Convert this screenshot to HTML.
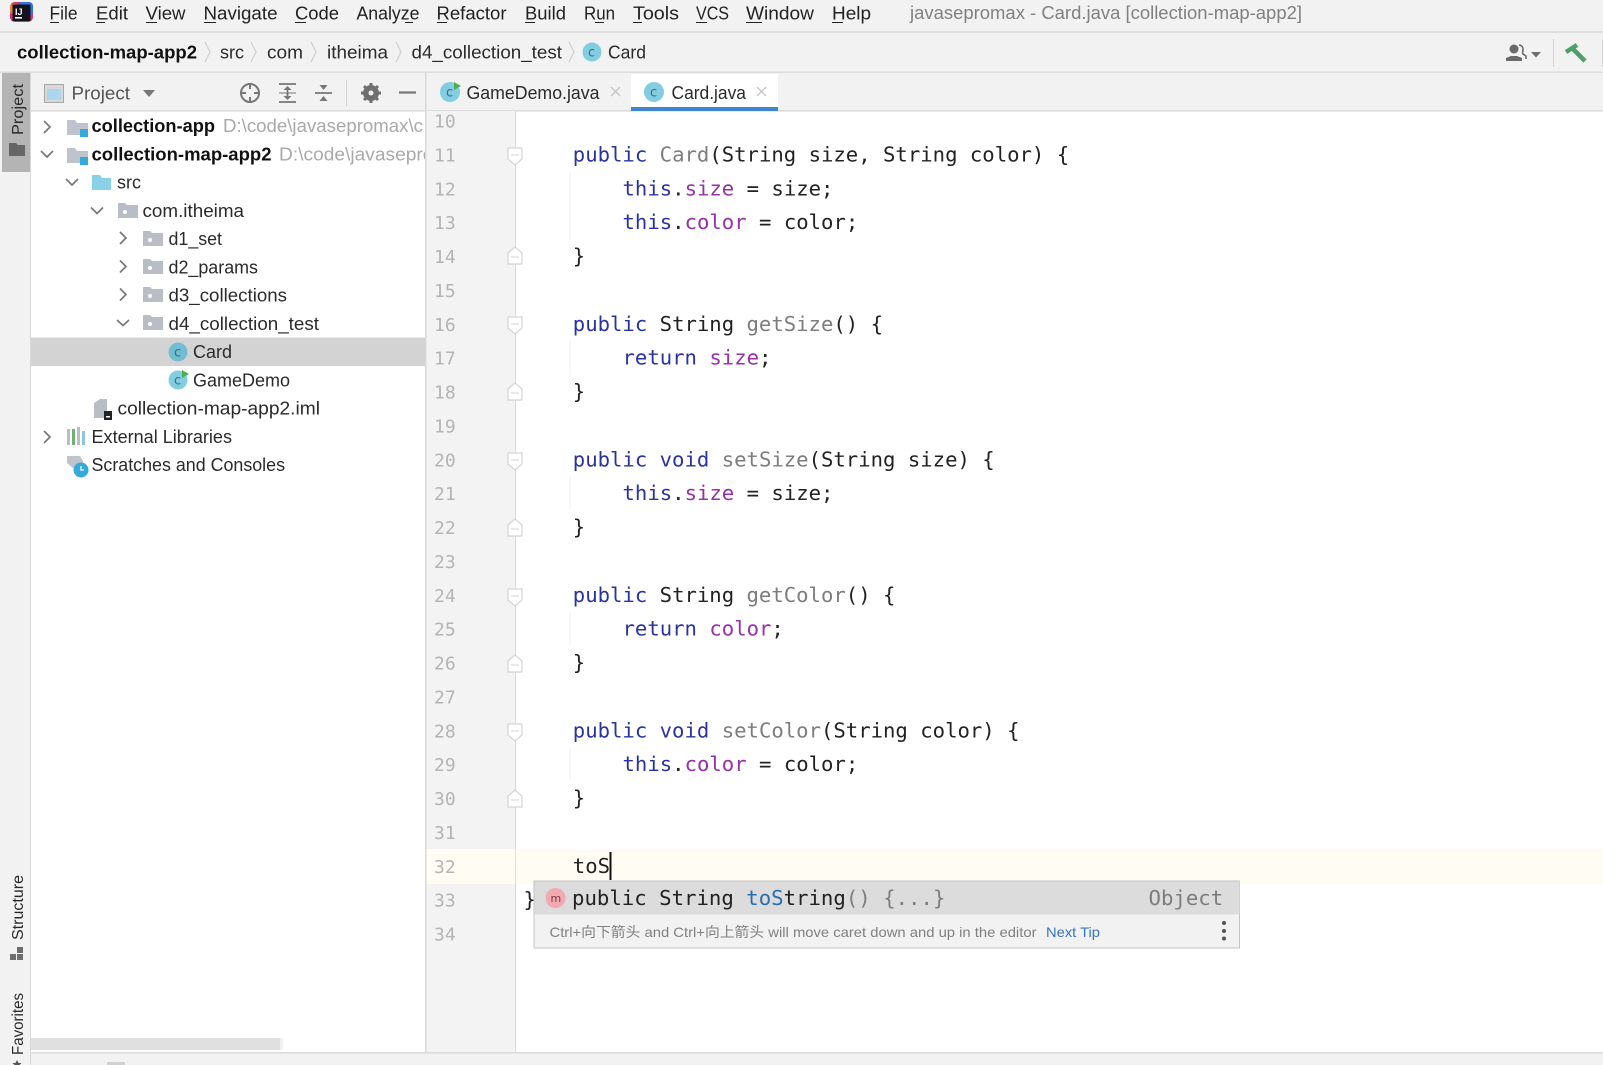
<!DOCTYPE html>
<html><head><meta charset="utf-8"><title>Card.java</title>
<style>
html,body{margin:0;padding:0;background:#fff;width:1603px;height:1065px;overflow:hidden}
svg{display:block;filter:blur(.35px)}
text{font-family:"Liberation Sans","Noto Sans CJK SC",sans-serif;font-size:18px;fill:#2a2a2a;white-space:pre}
.b{font-weight:bold;fill:#111}
.g{fill:#a9a9a9}
.m{font-size:18.5px;fill:#222}
.c{font-family:"DejaVu Sans Mono",monospace;font-size:20.62px;fill:#222}
.p{font-family:"DejaVu Sans Mono",monospace;font-size:20.68px;fill:#222}
.n{font-family:"DejaVu Sans Mono",monospace;font-size:18px;fill:#b4b4b4}
.k{fill:#2a32a0}.f{fill:#9530a6}.u{fill:#7d7d7d}
.ic{font-size:13px;fill:#3b6f80;font-family:"DejaVu Sans",sans-serif}
.chev{fill:none;stroke:#777;stroke-width:1.7}
.sep{fill:none;stroke:#cfcfcf;stroke-width:1.2}
.fold{fill:#fff;stroke:#d4d4d4;stroke-width:1.2}
</style></head><body>
<svg width="1603" height="1065" viewBox="0 0 1603 1065" xmlns="http://www.w3.org/2000/svg">
<rect width="1603" height="1065" fill="#fff"/>
<!-- chrome backgrounds -->
<rect width="1603" height="72" fill="#f2f2f2"/>
<rect y="31" width="1603" height="2" fill="#dcdcdc"/>
<rect y="71.5" width="1603" height="2" fill="#dcdcdc"/>
<rect x="0" y="73" width="30" height="992" fill="#f2f2f2"/>
<rect x="30" y="73" width="1" height="992" fill="#d8d8d8"/>
<rect x="2" y="73" width="28" height="99" fill="#b4b4b4"/>
<rect x="31" y="73" width="394" height="38" fill="#f2f2f2"/>
<rect x="425" y="73" width="1178" height="38" fill="#f2f2f2"/>
<rect x="31" y="110" width="1572" height="1.6" fill="#dcdcdc"/>
<rect x="425" y="73" width="1.5" height="980" fill="#d8d8d8"/>
<rect x="426" y="111" width="89" height="942" fill="#f3f3f3"/>
<rect x="515" y="111" width="1" height="942" fill="#dadada"/>
<!-- current line -->
<rect x="426" y="849" width="1177" height="35" fill="#fffdf3"/>
<rect x="515" y="849" width="1" height="35" fill="#e6e4da"/>
<!-- bottom bar -->
<rect y="1053" x="31" width="1572" height="12" fill="#f2f2f2"/>
<rect y="1052" x="31" width="1572" height="1.6" fill="#dcdcdc"/>
<rect x="31" y="1038" width="252" height="12" fill="#f0f0f0"/>
<rect x="31" y="1038" width="249" height="12" fill="#e0e0e0"/>
<rect x="107" y="1062" width="18" height="3" fill="#d0d0d0"/>

<!-- logo -->
<g>
<rect x="10" y="2" width="23" height="20" rx="5" fill="#d92f6e"/>
<rect x="18" y="2" width="15" height="14" rx="4" fill="#3572e0"/>
<rect x="10" y="4" width="9" height="10" rx="3" fill="#ef8426"/>
<rect x="12.500" y="4.500" width="18" height="16.500" fill="#14121c"/>
<rect x="15" y="17" width="7" height="1.6" fill="#fff"/>
<text x="15" y="15" style="font-size:9px;font-weight:bold;fill:#fff">IJ</text>
</g>
<!-- menu -->
<g>
<text class="m" x="49.5" y="19.5" textLength="28" lengthAdjust="spacingAndGlyphs">File</text>
<text class="m" x="96" y="19.5" textLength="32" lengthAdjust="spacingAndGlyphs">Edit</text>
<text class="m" x="145.5" y="19.5" textLength="40" lengthAdjust="spacingAndGlyphs">View</text>
<text class="m" x="203.5" y="19.5" textLength="74" lengthAdjust="spacingAndGlyphs">Navigate</text>
<text class="m" x="295" y="19.5" textLength="44" lengthAdjust="spacingAndGlyphs">Code</text>
<text class="m" x="356.5" y="19.5" textLength="63" lengthAdjust="spacingAndGlyphs">Analyze</text>
<text class="m" x="436.5" y="19.5" textLength="70" lengthAdjust="spacingAndGlyphs">Refactor</text>
<text class="m" x="525" y="19.5" textLength="41" lengthAdjust="spacingAndGlyphs">Build</text>
<text class="m" x="584" y="19.5" textLength="31" lengthAdjust="spacingAndGlyphs">Run</text>
<text class="m" x="633" y="19.5" textLength="46" lengthAdjust="spacingAndGlyphs">Tools</text>
<text class="m" x="696" y="19.5" textLength="33" lengthAdjust="spacingAndGlyphs">VCS</text>
<text class="m" x="746" y="19.5" textLength="68" lengthAdjust="spacingAndGlyphs">Window</text>
<text class="m" x="832" y="19.5" textLength="39" lengthAdjust="spacingAndGlyphs">Help</text>
<g stroke="#222" stroke-width="1.1">
<path d="M50 22.5h9M96 22.5h9M146 22.5h11M204 22.5h12M295 22.5h11M405 22.5h8M437 22.5h10M525 22.5h10M595 22.5h9M633 22.5h9M696 22.5h11M746 22.5h16M832 22.5h11"/>
</g>
<text x="910" y="19" style="font-size:18px;fill:#808080" textLength="392" lengthAdjust="spacingAndGlyphs">javasepromax - Card.java [collection-map-app2]</text>
</g>
<!-- breadcrumb -->
<g>
<text class="b" x="17" y="58.5" textLength="180" lengthAdjust="spacingAndGlyphs">collection-map-app2</text>
<path class="sep" d="M205 42l5 10-5 10M251 42l5 10-5 10M311 42l5 10-5 10M396 42l5 10-5 10M569 42l5 10-5 10"/>
<text x="220" y="58.5" textLength="24" lengthAdjust="spacingAndGlyphs">src</text>
<text x="267" y="58.5" textLength="36" lengthAdjust="spacingAndGlyphs">com</text>
<text x="327" y="58.5" textLength="61" lengthAdjust="spacingAndGlyphs">itheima</text>
<text x="411.5" y="58.5" textLength="150.5" lengthAdjust="spacingAndGlyphs">d4_collection_test</text>
<circle cx="592" cy="52" r="9.5" fill="#82cde2"/><text class="ic" x="588" y="56.500">c</text>
<text x="608" y="58.5" textLength="38" lengthAdjust="spacingAndGlyphs">Card</text>
</g>
<!-- right toolbar -->
<g>
<circle cx="1514" cy="49" r="4.5" fill="#6a6a6a"/><path d="M1506 61v-3l5-2h6l5 2v3z" fill="#6a6a6a"/>
<path d="M1519 45a4 4 0 0 1 4 4c0 3-1 4 0 5l3 2v3" fill="none" stroke="#6a6a6a" stroke-width="1.600"/>
<path d="M1531 52h10l-5 5.500z" fill="#6e6e6e"/>
<rect x="1553" y="39" width="1" height="28" fill="#d4d4d4"/>
<path d="M1566 52l11-7M1571 47l14 14" fill="none" stroke="#4fa068" stroke-width="4.500"/>
<rect x="1602" y="39" width="1" height="28" fill="#d4d4d4"/>
</g>
<!-- left stripe -->
<g>
<text transform="translate(23 135) rotate(-90)" x="0" y="0" style="font-size:16px" textLength="51" lengthAdjust="spacingAndGlyphs">Project</text>
<path d="M9 143h7l2 2h7v11H9z" fill="#666"/>
<text transform="translate(23 940) rotate(-90)" x="0" y="0" style="font-size:16px" textLength="65" lengthAdjust="spacingAndGlyphs">Structure</text>
<path d="M10 954h6v6h-6zM17 954h6v6h-6zM17 947h6v6h-6z" fill="#6d6d6d"/>
<text transform="translate(23 1055) rotate(-90)" x="0" y="0" style="font-size:16px" textLength="62" lengthAdjust="spacingAndGlyphs">Favorites</text>
<path d="M17 1060l1.500 3h3l-2 2h-5l-2-2h3z" fill="#555"/>
</g>
<!-- project header -->
<g>
<rect x="44.500" y="84.500" width="19" height="18" fill="#d8d8d8" stroke="#a8a8a8"/><rect x="47" y="89" width="14" height="11" fill="#a9d8ec"/>
<text x="71.500" y="99.500" style="fill:#555" textLength="58.500" lengthAdjust="spacingAndGlyphs">Project</text>
<path d="M143 90h12l-6 7z" fill="#777"/>
<g fill="none" stroke="#777" stroke-width="2">
<circle cx="250" cy="93" r="9"/><path d="M250 83v6M250 97v6M240 93h6M254 93h6"/>
<path d="M279 84h17M279 102h17M287.500 88v10" stroke-width="1.800"/>
<path d="M315 93h17" stroke-width="1.800"/>
<path d="M399 92.500h17" stroke-width="2.200"/>
</g>
<path d="M287.500 86l-4 4h8zM287.500 100l-4-4h8zM323.500 90l-4-5h8zM323.500 96l-4 5h8z" fill="#777"/>
<path d="M279 93h17" stroke="#777" stroke-width="1"/>
<rect x="346" y="80" width="1" height="26" fill="#d4d4d4"/>
<circle cx="371" cy="93" r="6" fill="none" stroke="#6f6f6f" stroke-width="4"/>
<path d="M371 83v20M361 93h20M364 86l14 14M378 86l-14 14" stroke="#6f6f6f" stroke-width="3"/>
<circle cx="371" cy="93" r="2.500" fill="#f2f2f2"/>
</g>
<!-- tabs -->
<g>
<rect x="631" y="74" width="147" height="34" fill="#fff"/>
<rect x="631" y="107" width="147" height="4" fill="#3d85d0"/>
<circle cx="450" cy="92" r="10" fill="#82cde2"/><text class="ic" x="446" y="96.500">c</text><path d="M454 82l7 4-7 4z" fill="#4fae4f"/>
<text x="466.500" y="99" textLength="133" lengthAdjust="spacingAndGlyphs">GameDemo.java</text>
<path d="M611 87l9 9M620 87l-9 9" stroke="#c4c4c4" stroke-width="1.300"/>
<circle cx="654" cy="92" r="10" fill="#82cde2"/><text class="ic" x="650" y="96.500">c</text>
<text x="671.500" y="99" textLength="74.500" lengthAdjust="spacingAndGlyphs">Card.java</text>
<path d="M757 87l9 9M766 87l-9 9" stroke="#c4c4c4" stroke-width="1.300"/>
</g>
<!-- tree -->
<rect x="31" y="337.500" width="394" height="28.500" fill="#d3d3d3"/>
<g>
<path class="chev" d="M44 121l6 6-6 6M41 151l6 6 6-6M66 179l6 6 6-6M91 207.500l6 6 6-6M120 232l6 6-6 6M120 260.500l6 6-6 6M120 288.500l6 6-6 6M117 320l6 5.500 6-5.500M44 431l6 6-6 6"/>
<path d="M67 120h8l2 3h11v12H67z" fill="#bfc4cc"/><rect x="80" y="129" width="8" height="8" fill="#35a8dc"/>
<path d="M67 148h8l2 3h11v12H67z" fill="#bfc4cc"/><rect x="80" y="157" width="8" height="8" fill="#35a8dc"/>
<path d="M92 175h8l2 3h9v12H92z" fill="#8ad0e8"/>
<path d="M118 203h7l2 2h11v13h-20z" fill="#b9bdc5"/><circle cx="125" cy="212" r="2" fill="#fff"/>
<path d="M143 231h7l2 2h11v13h-20z" fill="#b9bdc5"/><circle cx="150" cy="240" r="2" fill="#fff"/>
<path d="M143 259h7l2 2h11v13h-20z" fill="#b9bdc5"/><circle cx="150" cy="268" r="2" fill="#fff"/>
<path d="M143 287h7l2 2h11v13h-20z" fill="#b9bdc5"/><circle cx="150" cy="296" r="2" fill="#fff"/>
<path d="M143 315h7l2 2h11v13h-20z" fill="#b9bdc5"/><circle cx="150" cy="324" r="2" fill="#fff"/>
<circle cx="178" cy="352" r="9.500" fill="#73bdd4"/><text class="ic" x="174" y="356.500">c</text>
<circle cx="178" cy="380" r="9.500" fill="#82cde2"/><text class="ic" x="174" y="384.500">c</text><path d="M182 370l7 4-7 4z" fill="#4fae4f"/>
<path d="M94 403l6-4h7v12l4 1v6H94z" fill="#b9bdc5"/><rect x="104" y="411" width="8" height="9" fill="#222"/><rect x="106" y="416" width="4" height="1.500" fill="#fff"/>
<path d="M67 429h3v16h-3z" fill="#b9bdc5"/><path d="M72 429h3v16h-3z" fill="#6db36d"/><path d="M77 427h3v18h-3z" fill="#b9bdc5"/><path d="M82 431h3v14h-3z" fill="#8ec6dd"/>
<path d="M67 456h13l3 5v7h-10l-6-5z" fill="#bfc4cc"/><circle cx="81" cy="470" r="7.500" fill="#35a8dc"/><path d="M81 466v4h3" fill="none" stroke="#fff" stroke-width="1.200"/>

<text class="b" x="91.500" y="132" textLength="123.500" lengthAdjust="spacingAndGlyphs">collection-app</text>
<text class="g" x="223" y="132" textLength="200" lengthAdjust="spacingAndGlyphs">D:\code\javasepromax\c</text>
<text class="b" x="91.500" y="160.250" textLength="180" lengthAdjust="spacingAndGlyphs">collection-map-app2</text>
<text class="g" x="279" y="160.250" textLength="196" lengthAdjust="spacingAndGlyphs">D:\code\javasepromax\</text>
<text x="117" y="188.500" textLength="24" lengthAdjust="spacingAndGlyphs">src</text>
<text x="142.500" y="216.750" textLength="101.500" lengthAdjust="spacingAndGlyphs">com.itheima</text>
<text x="168.500" y="245" textLength="53.500" lengthAdjust="spacingAndGlyphs">d1_set</text>
<text x="168.500" y="273.250" textLength="89.500" lengthAdjust="spacingAndGlyphs">d2_params</text>
<text x="168.500" y="301.500" textLength="118.500" lengthAdjust="spacingAndGlyphs">d3_collections</text>
<text x="168.500" y="329.750" textLength="150.500" lengthAdjust="spacingAndGlyphs">d4_collection_test</text>
<text x="193" y="358" textLength="39" lengthAdjust="spacingAndGlyphs">Card</text>
<text x="193" y="386.250" textLength="97" lengthAdjust="spacingAndGlyphs">GameDemo</text>
<text x="117.500" y="414.500" textLength="202.500" lengthAdjust="spacingAndGlyphs">collection-map-app2.iml</text>
<text x="91.500" y="442.750" textLength="140.500" lengthAdjust="spacingAndGlyphs">External Libraries</text>
<text x="91.500" y="471" textLength="193.500" lengthAdjust="spacingAndGlyphs">Scratches and Consoles</text>
</g>
<!-- cover clipped path overflow: re-draw panel border + gutter -->
<rect x="425" y="111" width="1.500" height="942" fill="#d8d8d8"/>
<rect x="426.500" y="111" width="88.500" height="120" fill="#f3f3f3"/>

<!-- line numbers -->
<g>
<text class="n" x="434" y="127.600">10</text>
<text class="n" x="434" y="161.500">11</text>
<text class="n" x="434" y="195.400">12</text>
<text class="n" x="434" y="229.200">13</text>
<text class="n" x="434" y="263.100">14</text>
<text class="n" x="434" y="297">15</text>
<text class="n" x="434" y="330.900">16</text>
<text class="n" x="434" y="364.700">17</text>
<text class="n" x="434" y="398.600">18</text>
<text class="n" x="434" y="432.500">19</text>
<text class="n" x="434" y="466.400">20</text>
<text class="n" x="434" y="500.200">21</text>
<text class="n" x="434" y="534.100">22</text>
<text class="n" x="434" y="568">23</text>
<text class="n" x="434" y="601.900">24</text>
<text class="n" x="434" y="635.700">25</text>
<text class="n" x="434" y="669.600">26</text>
<text class="n" x="434" y="703.500">27</text>
<text class="n" x="434" y="737.400">28</text>
<text class="n" x="434" y="771.200">29</text>
<text class="n" x="434" y="805.100">30</text>
<text class="n" x="434" y="839">31</text>
<text class="n" x="434" y="872.900">32</text>
<text class="n" x="434" y="906.700">33</text>
<text class="n" x="434" y="940.600">34</text>
</g>
<!-- folds -->
<g>
<path class="fold" d="M508 148h14v11l-7 6-7-6z"/><path d="M511 155h8" stroke="#d0d0d0"/>
<path class="fold" d="M508 317h14v11l-7 6-7-6z"/><path d="M511 324h8" stroke="#d0d0d0"/>
<path class="fold" d="M508 453h14v11l-7 6-7-6z"/><path d="M511 460h8" stroke="#d0d0d0"/>
<path class="fold" d="M508 589h14v11l-7 6-7-6z"/><path d="M511 596h8" stroke="#d0d0d0"/>
<path class="fold" d="M508 724h14v11l-7 6-7-6z"/><path d="M511 731h8" stroke="#d0d0d0"/>
<path class="fold" d="M508 264h14v-11l-7-6-7 6z"/><path d="M511 257h8" stroke="#d0d0d0"/>
<path class="fold" d="M508 400h14v-11l-7-6-7 6z"/><path d="M511 393h8" stroke="#d0d0d0"/>
<path class="fold" d="M508 536h14v-11l-7-6-7 6z"/><path d="M511 529h8" stroke="#d0d0d0"/>
<path class="fold" d="M508 672h14v-11l-7-6-7 6z"/><path d="M511 665h8" stroke="#d0d0d0"/>
<path class="fold" d="M508 807h14v-11l-7-6-7 6z"/><path d="M511 800h8" stroke="#d0d0d0"/>
<path d="M570 172v68M570 341v34M570 476v34M570 612v34M570 747v34" stroke="#f1f1f1" stroke-width="1"/>
</g>
<!-- code -->
<g>
<text class="c" x="572.800" y="161.500"><tspan class="k">public</tspan> <tspan class="u">Card</tspan>(String size, String color) {</text>
<text class="c" x="622.500" y="195.400"><tspan class="k">this</tspan>.<tspan class="f">size</tspan> = size;</text>
<text class="c" x="622.500" y="229.200"><tspan class="k">this</tspan>.<tspan class="f">color</tspan> = color;</text>
<text class="c" x="572.800" y="263.100">}</text>
<text class="c" x="572.800" y="330.900"><tspan class="k">public</tspan> String <tspan class="u">getSize</tspan>() {</text>
<text class="c" x="622.500" y="364.700"><tspan class="k">return</tspan> <tspan class="f">size</tspan>;</text>
<text class="c" x="572.800" y="398.600">}</text>
<text class="c" x="572.800" y="466.400"><tspan class="k">public void</tspan> <tspan class="u">setSize</tspan>(String size) {</text>
<text class="c" x="622.500" y="500.200"><tspan class="k">this</tspan>.<tspan class="f">size</tspan> = size;</text>
<text class="c" x="572.800" y="534.100">}</text>
<text class="c" x="572.800" y="601.900"><tspan class="k">public</tspan> String <tspan class="u">getColor</tspan>() {</text>
<text class="c" x="622.500" y="635.700"><tspan class="k">return</tspan> <tspan class="f">color</tspan>;</text>
<text class="c" x="572.800" y="669.600">}</text>
<text class="c" x="572.800" y="737.400"><tspan class="k">public void</tspan> <tspan class="u">setColor</tspan>(String color) {</text>
<text class="c" x="622.500" y="771.200"><tspan class="k">this</tspan>.<tspan class="f">color</tspan> = color;</text>
<text class="c" x="572.800" y="805.100">}</text>
<text class="c" x="572.800" y="872.900">toS</text>
<rect x="609.500" y="852" width="2" height="28" fill="#111"/>
<text class="c" x="523.500" y="906.700">}</text>
</g>
<!-- popup -->
<g>
<rect x="534" y="881" width="705.500" height="67" fill="#f2f2f2" stroke="#c4c4c4" stroke-width="1"/>
<rect x="534.500" y="881.500" width="705" height="33" fill="#dcdcdc"/>
<circle cx="555.500" cy="898" r="10" fill="#f2a9b2"/>
<text x="550.500" y="902" style="font-size:11px;fill:#7a3b45;font-family:'DejaVu Sans',sans-serif">m</text>
<text class="p" x="572" y="905">public String <tspan style="fill:#2470b3">toS</tspan>tring<tspan class="u">() {...}</tspan></text>
<text class="p u" x="1148.500" y="905">Object</text>
<text x="549.500" y="937" style="font-size:14px;fill:#808080" textLength="487" lengthAdjust="spacingAndGlyphs">Ctrl+向下箭头 and Ctrl+向上箭头 will move caret down and up in the editor</text>
<text x="1046" y="937" style="font-size:14px;fill:#3574c0" textLength="54" lengthAdjust="spacingAndGlyphs">Next Tip</text>
<circle cx="1224" cy="923" r="2" fill="#555"/><circle cx="1224" cy="931" r="2" fill="#555"/><circle cx="1224" cy="938.500" r="2" fill="#555"/>
</g>
</svg>
</body></html>
